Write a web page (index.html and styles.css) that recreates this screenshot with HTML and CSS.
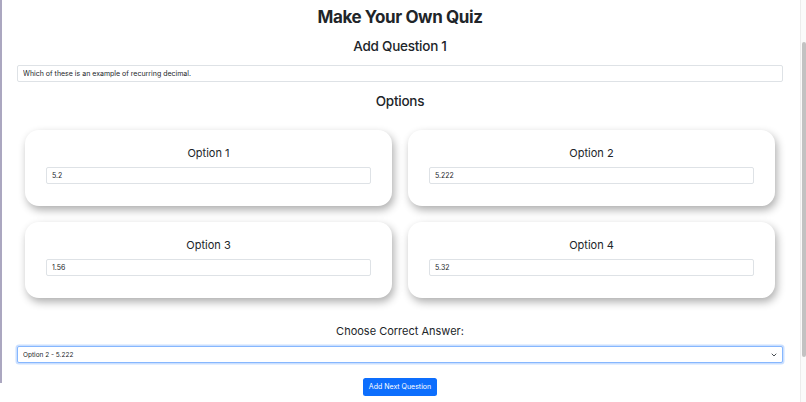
FILE: index.html
```html
<!DOCTYPE html>
<html lang="en">
<head>
<meta charset="utf-8">
<title>Make Your Own Quiz</title>
<link rel="stylesheet" href="styles.css">
</head>
<body>
  <div class="edge"></div>
  <main class="page">
    <h1 class="title">Make Your Own Quiz</h1>
    <h2 class="subtitle">Add Question 1</h2>
    <input class="field" type="text" value="Which of these is an example of recurring decimal.">
    <h2 class="subtitle options-head">Options</h2>
    <div class="options">
      <div class="card">
        <h3 class="card-title">Option 1</h3>
        <input class="field" type="text" value="5.2">
      </div>
      <div class="card">
        <h3 class="card-title">Option 2</h3>
        <input class="field" type="text" value="5.222">
      </div>
      <div class="card">
        <h3 class="card-title">Option 3</h3>
        <input class="field" type="text" value="1.56">
      </div>
      <div class="card">
        <h3 class="card-title">Option 4</h3>
        <input class="field" type="text" value="5.32">
      </div>
    </div>
    <h3 class="answer-head">Choose Correct Answer:</h3>
    <div class="select-wrap">
      <select class="select">
        <option>Option 1 - 5.2</option>
        <option selected>Option 2 - 5.222</option>
        <option>Option 3 - 1.56</option>
        <option>Option 4 - 5.32</option>
      </select>
      <svg class="chev" width="6" height="4" viewBox="0 0 6 4"><path d="M1 1 L3 3 L5 1" fill="none" stroke="#343a40" stroke-width="0.9" stroke-linecap="round" stroke-linejoin="round"/></svg>
    </div>
    <div class="actions">
      <button class="btn" type="button">Add Next Question</button>
    </div>
  </main>
  <div class="scrollbar"><div class="thumb"></div></div>
</body>
</html>
```

FILE: styles.css
```css
* { box-sizing: border-box; }
html, body { margin: 0; padding: 0; }
body {
  width: 806px;
  height: 402px;
  overflow: hidden;
  display: flex;
  align-items: flex-start;
  background: #fff;
  font-family: Inter, "Noto Sans", sans-serif;
  color: #212529;
}
.edge {
  flex: none;
  width: 2px;
  height: 383px;
  background: #aba7c0;
}
.page {
  flex: 1;
  padding: 6px 17px 0 15px;
  display: flex;
  flex-direction: column;
}
.title {
  margin: 0;
  font-size: 17px;
  line-height: 22px;
  font-weight: 700;
  letter-spacing: -0.4px;
  text-align: center;
}
.subtitle {
  margin: 9px 0 0;
  font-size: 13.5px;
  line-height: 18px;
  font-weight: 500;
  letter-spacing: -0.25px;
  text-align: center;
}
.options-head { margin-top: 10px; }
.field {
  display: block;
  width: 100%;
  height: 17px;
  margin: 10px 0 0;
  padding: 0 5px;
  border: 1px solid #dee2e6;
  border-radius: 2px;
  background: #fff;
  font-family: Inter, "Noto Sans", sans-serif;
  font-size: 7px;
  color: #212529;
  outline: none;
}
.options {
  margin-top: 20px;
  padding: 0 8px;
  display: grid;
  grid-template-columns: 1fr 1fr;
  column-gap: 16px;
  row-gap: 16px;
}
.card {
  height: 76px;
  padding: 15px 21px 0;
  background: #fff;
  border-radius: 14px;
  box-shadow: 2px 4px 8px rgba(0, 0, 0, 0.32);
}
.card-title {
  margin: 0;
  font-size: 11px;
  line-height: 16px;
  font-weight: 400;
  text-align: center;
}
.card .field { margin-top: 6px; }
.answer-head {
  margin: 25px 0 0;
  font-size: 11px;
  line-height: 16px;
  font-weight: 400;
  text-align: center;
}
.select-wrap {
  position: relative;
  margin-top: 7px;
}
.select {
  display: block;
  width: 100%;
  height: 17px;
  padding: 0 5px;
  border: 1px solid #86b7fe;
  border-radius: 2px;
  box-shadow: 0 0 0 1.5px rgba(13, 110, 253, 0.22);
  background: #fff;
  -webkit-appearance: none;
  appearance: none;
  font-family: Inter, "Noto Sans", sans-serif;
  font-size: 6.5px;
  color: #212529;
  outline: none;
}
.chev {
  position: absolute;
  right: 6px;
  top: 7px;
}
.actions {
  margin-top: 15px;
  display: flex;
  justify-content: center;
}
.btn {
  width: 74px;
  height: 18px;
  padding: 0;
  border: none;
  border-radius: 2.5px;
  background: #0d6efd;
  color: #fff;
  font-family: Inter, "Noto Sans", sans-serif;
  font-size: 7px;
  line-height: 18px;
}
.scrollbar {
  flex: none;
  width: 6px;
  height: 402px;
  background: #fafafa;
  border-left: 1px solid #ececec;
  padding-top: 42px;
}
.thumb {
  width: 4px;
  height: 315px;
  margin-left: 0.5px;
  background: #c2c2c2;
  border-radius: 2px;
}
```
